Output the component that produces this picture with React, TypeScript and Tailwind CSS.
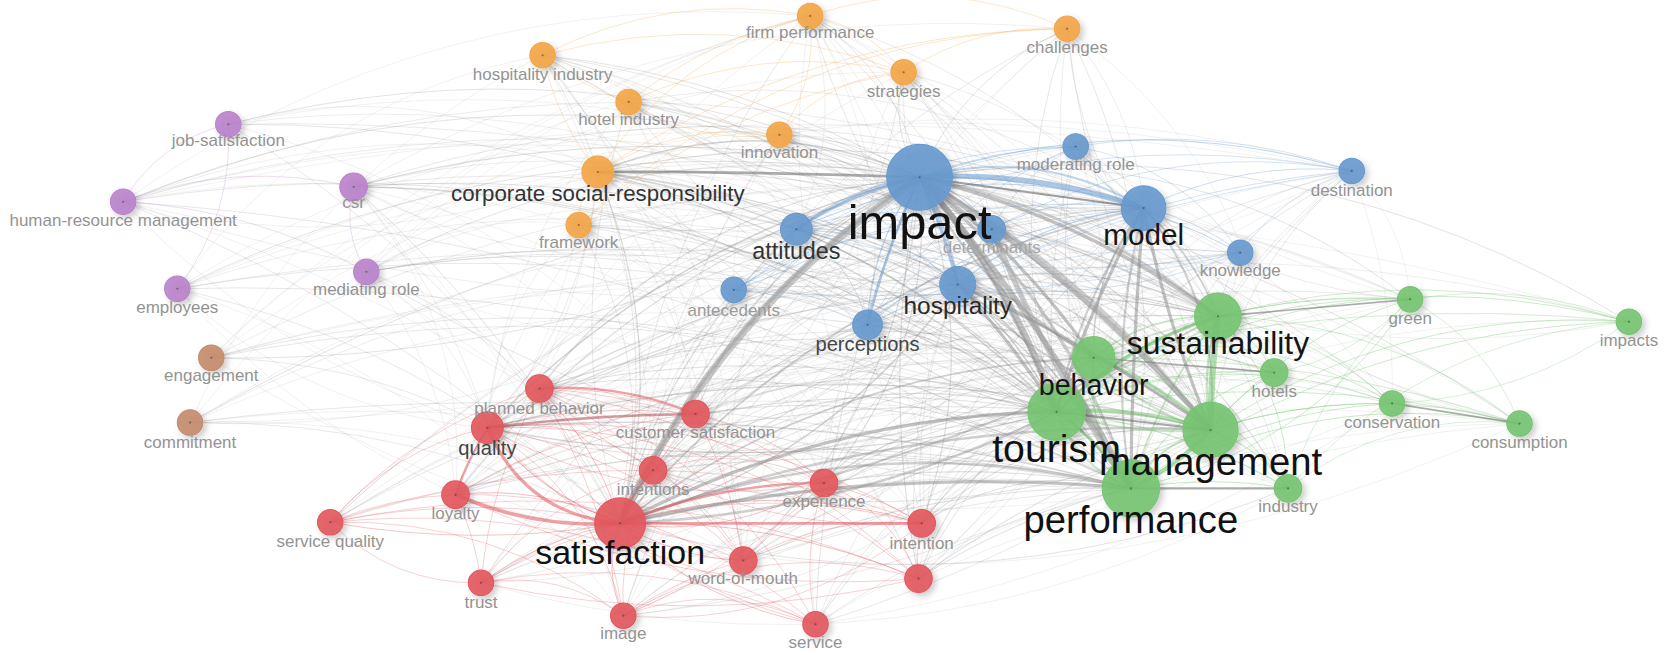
import React from "react";

// keyword co-occurrence map (coordinates in a 1568x617 design space, scaled to fit)
const COL = {
  blue: "#6799ce",
  orange: "#f3a545",
  green: "#76c471",
  red: "#e2565c",
  purple: "#b983cb",
  brown: "#c48b6c",
};

type Cluster = keyof typeof COL;

type Node = {
  n: string;
  x: number;
  y: number;
  r: number;
  c: Cluster;
  fs?: number;
  ly?: number;
  tc?: string;
  hide?: boolean;
};

const nodes: Node[] = [
  // blue
  { n: "impact", x: 866, y: 167, r: 31, c: "blue", fs: 46, ly: 225, tc: "#111" },
  { n: "model", x: 1077, y: 196, r: 21, c: "blue", fs: 28, ly: 231, tc: "#151515" },
  { n: "moderating role", x: 1013, y: 138, r: 12, c: "blue", ly: 160 },
  { n: "destination", x: 1273, y: 161, r: 12, c: "blue", ly: 185 },
  { n: "knowledge", x: 1168, y: 238, r: 12, c: "blue", ly: 260 },
  { n: "attitudes", x: 750, y: 216, r: 15, c: "blue", fs: 22, ly: 244, tc: "#333" },
  { n: "determinants", x: 934, y: 216, r: 13, c: "blue", ly: 238, tc: "#a5a5a5" },
  { n: "hospitality", x: 902, y: 268, r: 17, c: "blue", fs: 23, ly: 296, tc: "#2a2a2a" },
  { n: "antecedents", x: 691, y: 273, r: 12, c: "blue", ly: 298, tc: "#9a9a9a" },
  { n: "perceptions", x: 817, y: 306, r: 14, c: "blue", fs: 19, ly: 331, tc: "#444" },
  // orange
  { n: "firm performance", x: 763, y: 15, r: 12, c: "orange", ly: 36 },
  { n: "challenges", x: 1005, y: 27, r: 12, c: "orange", ly: 50 },
  { n: "hospitality industry", x: 511, y: 52, r: 12, c: "orange", ly: 75 },
  { n: "strategies", x: 851, y: 68, r: 12, c: "orange", ly: 91 },
  { n: "hotel industry", x: 592, y: 96, r: 12, c: "orange", ly: 118 },
  { n: "innovation", x: 734, y: 127, r: 12, c: "orange", ly: 149 },
  { n: "corporate social-responsibility", x: 563, y: 162, r: 15, c: "orange", fs: 21, ly: 189, tc: "#333" },
  { n: "framework", x: 545, y: 212, r: 12, c: "orange", ly: 234 },
  // purple
  { n: "job-satisfaction", x: 215, y: 117, r: 12, c: "purple", ly: 138 },
  { n: "csr", x: 333, y: 176, r: 13, c: "purple", ly: 196 },
  { n: "human-resource management", x: 116, y: 190, r: 12, c: "purple", ly: 213 },
  { n: "employees", x: 167, y: 272, r: 12, c: "purple", ly: 295 },
  { n: "mediating role", x: 345, y: 256, r: 12, c: "purple", ly: 278 },
  // brown
  { n: "engagement", x: 199, y: 337, r: 12, c: "brown", ly: 359 },
  { n: "commitment", x: 179, y: 398, r: 12, c: "brown", ly: 422 },
  // green
  { n: "sustainability", x: 1147, y: 298, r: 22, c: "green", fs: 30, ly: 333, tc: "#151515" },
  { n: "behavior", x: 1030, y: 337, r: 20, c: "green", fs: 27, ly: 372, tc: "#151515" },
  { n: "tourism", x: 995, y: 388, r: 27, c: "green", fs: 37, ly: 435, tc: "#111" },
  { n: "management", x: 1140, y: 405, r: 26, c: "green", fs: 36, ly: 447, tc: "#111" },
  { n: "performance", x: 1065, y: 460, r: 27, c: "green", fs: 36, ly: 502, tc: "#111" },
  { n: "green", x: 1328, y: 282, r: 12, c: "green", ly: 305 },
  { n: "impacts", x: 1534, y: 303, r: 12, c: "green", ly: 326 },
  { n: "hotels", x: 1200, y: 351, r: 13, c: "green", ly: 374 },
  { n: "conservation", x: 1311, y: 380, r: 12, c: "green", ly: 403 },
  { n: "consumption", x: 1431, y: 399, r: 12, c: "green", ly: 422 },
  { n: "industry", x: 1213, y: 460, r: 13, c: "green", ly: 482 },
  // red
  { n: "planned behavior", x: 508, y: 366, r: 13, c: "red", ly: 390 },
  { n: "customer satisfaction", x: 655, y: 390, r: 13, c: "red", ly: 413 },
  { n: "quality", x: 459, y: 403, r: 15, c: "red", fs: 19, ly: 429, tc: "#444" },
  { n: "intentions", x: 615, y: 443, r: 13, c: "red", ly: 466 },
  { n: "loyalty", x: 429, y: 466, r: 13, c: "red", ly: 489 },
  { n: "experience", x: 776, y: 455, r: 13, c: "red", ly: 478 },
  { n: "satisfaction", x: 584, y: 493, r: 24, c: "red", fs: 32, ly: 531, tc: "#111" },
  { n: "service quality", x: 311, y: 492, r: 12, c: "red", ly: 515 },
  { n: "intention", x: 868, y: 493, r: 13, c: "red", ly: 517 },
  { n: "word-of-mouth", x: 700, y: 528, r: 13, c: "red", ly: 550 },
  { n: "trust", x: 453, y: 549, r: 12, c: "red", ly: 573 },
  { n: "image", x: 587, y: 580, r: 12, c: "red", ly: 602 },
  { n: "service", x: 768, y: 588, r: 12, c: "red", ly: 610 },
  { n: "behavioral intentions", x: 865, y: 545, r: 13, c: "red", hide: true },
];

const byName = (s: string) => nodes.find((d) => d.n === s)!;

const rnd = (a: number, b: number) => {
  const s = Math.sin(a * 12.9898 + b * 78.233) * 43758.5453;
  return s - Math.floor(s);
};

type Edge = { a: Node; b: Node; w: number; color: string; op: number; k: number };

const weight = (d: Node) => Math.max(1.5, d.r - 10);

const edges: Edge[] = [];
for (let i = 0; i < nodes.length; i++) {
  for (let j = i + 1; j < nodes.length; j++) {
    const a = nodes[i];
    const b = nodes[j];
    const wa = weight(a);
    const wb = weight(b);
    const same = a.c === b.c;
    const dist = Math.hypot(a.x - b.x, a.y - b.y);
    let p = 0.08 + (wa * wb) / 36 + (same ? 0.35 : 0);
    if (dist > 800) p *= 0.55;
    if (rnd(i, j) > p) continue;
    const ww = Math.min(wa * wb, 300);
    const k = (0.08 + rnd(j, i) * 0.14) * (rnd(i + 3, j + 7) > 0.2 ? 1 : -1);
    edges.push({
      a,
      b,
      w: 0.6 + ww / 130,
      color: same ? COL[a.c] : "#8a8a8a",
      op: same ? 0.4 : 0.16 + Math.min(ww, 120) / 500,
      k,
    });
  }
}

const strong: [string, string, number, string, number][] = [
  ["impact", "tourism", 6, "#8f8f8f", 0.1],
  ["impact", "management", 5, "#8f8f8f", 0.08],
  ["impact", "performance", 5, "#8f8f8f", 0.06],
  ["impact", "sustainability", 3.5, "#8f8f8f", 0.1],
  ["satisfaction", "impact", 7, "#9a9a9a", 0.14],
  ["impact", "behavior", 3, "#8f8f8f", 0.08],
  ["impact", "model", 5, COL.blue, 0.1],
  ["impact", "hospitality", 3, COL.blue, 0.05],
  ["attitudes", "impact", 3, COL.blue, 0.1],
  ["perceptions", "impact", 2.5, COL.blue, 0.05],
  ["corporate social-responsibility", "impact", 2.5, "#666", 0.01],
  ["satisfaction", "tourism", 3, "#8f8f8f", 0.12],
  ["satisfaction", "performance", 3, "#8f8f8f", 0.08],
  ["quality", "satisfaction", 3, COL.red, -0.3],
  ["loyalty", "satisfaction", 3.5, COL.red, -0.12],
  ["quality", "customer satisfaction", 2.5, "#b0474c", 0.03],
  ["planned behavior", "customer satisfaction", 2, COL.red, 0.12],
  ["satisfaction", "experience", 2.5, COL.red, 0.1],
  ["satisfaction", "intention", 2.5, COL.red, 0.0],
  ["satisfaction", "intentions", 2, COL.red, 0.1],
  ["loyalty", "quality", 2, COL.red, 0.05],
  ["tourism", "management", 4, COL.green, 0.1],
  ["sustainability", "management", 6, COL.green, 0.03],
  ["tourism", "sustainability", 3, COL.green, 0.12],
  ["behavior", "management", 3, COL.green, 0.1],
  ["performance", "management", 4, COL.green, -0.1],
  ["tourism", "performance", 3, COL.green, 0.1],
  ["model", "management", 3, "#8f8f8f", -0.05],
  ["model", "tourism", 3, "#8f8f8f", 0.05],
  ["model", "performance", 3, "#8f8f8f", 0.02],
  ["hospitality", "tourism", 3, "#8f8f8f", 0.05],
  ["hospitality", "management", 3, "#8f8f8f", 0.05],
  ["determinants", "performance", 5, "#a0a0a0", -0.05],
  ["industry", "performance", 2, "#666", 0],
  ["conservation", "consumption", 1.6, "#666", 0],
  ["green", "sustainability", 1.6, "#666", 0],
  ["behavior", "hotels", 1.6, "#777", 0],
  ["model", "impact", 2, "#555", 0],
  ["tourism", "management", 2, "#666", 0.0],
];

const curve = (a: Node, b: Node, k: number) => {
  const [l, r] = a.x <= b.x ? [a, b] : [b, a];
  const dx = r.x - l.x;
  const dy = r.y - l.y;
  const cx = (l.x + r.x) / 2 + dy * k;
  const cy = (l.y + r.y) / 2 - dx * k;
  return `M${l.x} ${l.y}Q${cx} ${cy} ${r.x} ${r.y}`;
};

export default function App() {
  const gray = edges.filter((e) => e.color === "#8a8a8a").sort((p, q) => p.w - q.w);
  const colored = edges.filter((e) => e.color !== "#8a8a8a");

  return (
    <div className="w-[1665px] h-[655px] bg-white overflow-hidden">
      <svg
        viewBox="0 0 1568 617"
        preserveAspectRatio="none"
        className="block w-full h-full font-['Liberation_Sans',Arial,sans-serif]"
      >
        <defs>
          <filter id="sh" x="-60%" y="-60%" width="220%" height="220%">
            <feDropShadow dx="3" dy="3" stdDeviation="3" floodColor="#000" floodOpacity="0.22" />
          </filter>
        </defs>

        <g fill="none" strokeLinecap="round">
          {gray.map((e, i) => (
            <path key={"g" + i} d={curve(e.a, e.b, e.k)} stroke={e.color} strokeOpacity={e.op} strokeWidth={e.w} />
          ))}
          {colored.map((e, i) => (
            <path key={"c" + i} d={curve(e.a, e.b, e.k)} stroke={e.color} strokeOpacity={e.op} strokeWidth={Math.min(e.w, 2)} />
          ))}
          {strong.map(([a, b, w, c, k], i) => (
            <path key={"s" + i} d={curve(byName(a), byName(b), k)} stroke={c} strokeOpacity={0.55} strokeWidth={w} />
          ))}
        </g>

        <g filter="url(#sh)">
          {nodes.map((d) => (
            <circle key={d.n} cx={d.x} cy={d.y} r={d.r} fill={COL[d.c]} fillOpacity={0.9} stroke={COL[d.c]} strokeWidth={1} />
          ))}
        </g>
        <g fill="#333" fillOpacity={0.5}>
          {nodes.map((d) => (
            <circle key={d.n + "dot"} cx={d.x} cy={d.y} r={1} />
          ))}
        </g>

        <g textAnchor="middle">
          {nodes
            .filter((d) => !d.hide)
            .map((d) => (
              <text key={d.n + "t"} x={d.x} y={d.ly} fontSize={d.fs ?? 16} fill={d.tc ?? "#939393"}>
                {d.n}
              </text>
            ))}
        </g>
      </svg>
    </div>
  );
}
